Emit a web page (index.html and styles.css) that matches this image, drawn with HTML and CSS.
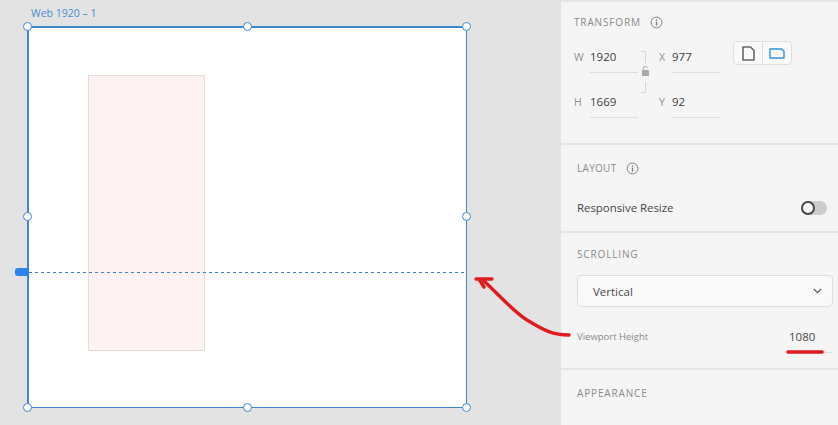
FILE: index.html
```html
<!DOCTYPE html>
<html lang="en">
<head>
    <meta charset="UTF-8">
    <title>Web 1920 - Viewport Height</title>
    <link rel="stylesheet" href="styles.css">
</head>
<body>
    <div class="app">
        <div class="canvas">
            <div class="artboard-name">Web 1920 – 1</div>
            <div class="artboard">
                <div class="pink-rect"></div>
                <div class="guide"></div>
                <span class="handle h-tl"></span>
                <span class="handle h-tc"></span>
                <span class="handle h-tr"></span>
                <span class="handle h-ml"></span>
                <span class="handle h-mr"></span>
                <span class="handle h-bl"></span>
                <span class="handle h-bc"></span>
                <span class="handle h-br"></span>
            </div>
            <div class="guide-tab"></div>
        </div>

        <div class="panel">
            <section class="section transform">
                <div class="heading">
                    <span>TRANSFORM</span>
                    <svg class="info" width="13" height="13" viewBox="0 0 13 13">
                        <circle cx="6.5" cy="6.5" r="5.4" fill="none" stroke="#808080" stroke-width="1"/>
                        <rect x="5.8" y="5.6" width="1.4" height="4" fill="#808080"/>
                        <rect x="5.8" y="3.3" width="1.4" height="1.4" fill="#808080"/>
                    </svg>
                </div>
                <div class="transform-body">
                    <div class="fields">
                        <label class="field-label">W</label>
                        <div class="field-value">1920</div>
                        <div class="lock">
                            <svg width="10" height="42" viewBox="0 0 10 42">
                                <path d="M1 0.5H5.5V12M5.5 31V41.5H1" fill="none" stroke="#d2d2d2" stroke-width="1"/>
                                <path d="M3.2 19V17.4a2.3 2.3 0 0 1 4.4 -0.6" fill="none" stroke="#a8a8a8" stroke-width="1"/>
                                <rect x="2" y="19" width="7" height="6" rx="0.8" fill="#a8a8a8"/>
                            </svg>
                        </div>
                        <label class="field-label">X</label>
                        <div class="field-value">977</div>
                        <label class="field-label">H</label>
                        <div class="field-value">1669</div>
                        <label class="field-label">Y</label>
                        <div class="field-value">92</div>
                    </div>
                    <div class="orient">
                        <div class="orient-btn">
                            <svg width="13" height="15" viewBox="0 0 13 15">
                                <path d="M1 1H8.5L12 4.5V14H1Z" fill="none" stroke="#666666" stroke-width="1.6" stroke-linejoin="round"/>
                            </svg>
                        </div>
                        <div class="orient-btn">
                            <svg width="16" height="11" viewBox="0 0 16 11">
                                <path d="M1 1H12.5L15 3.5V10H1Z" fill="none" stroke="#2e94e0" stroke-width="1.4" stroke-linejoin="round"/>
                            </svg>
                        </div>
                    </div>
                </div>
            </section>

            <section class="section layout">
                <div class="heading">
                    <span>LAYOUT</span>
                    <svg class="info" width="13" height="13" viewBox="0 0 13 13">
                        <circle cx="6.5" cy="6.5" r="5.4" fill="none" stroke="#808080" stroke-width="1"/>
                        <rect x="5.8" y="5.6" width="1.4" height="4" fill="#808080"/>
                        <rect x="5.8" y="3.3" width="1.4" height="1.4" fill="#808080"/>
                    </svg>
                </div>
                <div class="resize-row">
                    <span>Responsive Resize</span>
                    <div class="toggle"><span class="knob"></span></div>
                </div>
            </section>

            <section class="section scrolling">
                <div class="heading">SCROLLING</div>
                <div class="select">
                    <span>Vertical</span>
                    <svg width="9" height="6" viewBox="0 0 9 6">
                        <path d="M0.7 0.8L4.5 4.6L8.3 0.8" fill="none" stroke="#555" stroke-width="1.2"/>
                    </svg>
                </div>
                <div class="viewport-row">
                    <span class="viewport-label">Viewport Height</span>
                    <span class="viewport-value">1080</span>
                </div>
            </section>

            <section class="section appearance">
                <div class="heading">APPEARANCE</div>
            </section>
        </div>
    </div>

    <svg class="scribble" width="838" height="425" viewBox="0 0 838 425">
        <path d="M569 335C553 335 545 331 527 320C514 312 502 298 484 281" fill="none" stroke="#e01b1f" stroke-width="3.4" stroke-linecap="round"/>
        <path d="M476 279H492M479 279L484 287" fill="none" stroke="#e01b1f" stroke-width="3.4" stroke-linecap="round"/>
        <path d="M788 352H822" fill="none" stroke="#e01b1f" stroke-width="3.6" stroke-linecap="round"/>
    </svg>
</body>
</html>
```

FILE: styles.css
```css
html, body {
    margin: 0;
    padding: 0;
}
body {
    width: 838px;
    height: 425px;
    overflow: hidden;
    position: relative;
    font-family: 'Open Sans', 'Noto Sans', sans-serif;
    background-color: #e3e3e3;
}
.app {
    display: flex;
    height: 425px;
}

/* canvas side */
.canvas {
    width: 561px;
    flex-shrink: 0;
    position: relative;
    background-color: #e3e3e3;
}
.artboard-name {
    position: absolute;
    left: 31px;
    top: 6px;
    font-size: 10.5px;
    line-height: 14px;
    color: #4a8ad4;
}
.artboard {
    position: absolute;
    left: 27px;
    top: 26px;
    width: 437px;
    height: 379px;
    background-color: white;
    border: 1px solid #3f86d2;
    border-left-width: 2px;
    border-top-width: 2px;
}
.pink-rect {
    position: absolute;
    left: 59px;
    top: 47px;
    width: 115px;
    height: 274px;
    background-color: #fef2f2;
    border: 1px solid #ead8d8;
}
.guide {
    position: absolute;
    left: 0;
    right: 0;
    top: 244px;
    height: 1px;
    background-image: repeating-linear-gradient(to right, #3f7fc8 0, #3f7fc8 3px, transparent 3px, transparent 6px);
}
.guide-tab {
    position: absolute;
    left: 15px;
    top: 268px;
    width: 14px;
    height: 8px;
    background-color: #2a82ea;
    border-radius: 3px 0 0 3px;
}
.handle {
    position: absolute;
    width: 7px;
    height: 7px;
    background-color: white;
    border: 1px solid #3f86d2;
    border-radius: 50%;
}
.h-tl { left: -6px; top: -6px; }
.h-tc { left: 214px; top: -6px; }
.h-tr { left: 433px; top: -6px; }
.h-ml { left: -6px; top: 184px; }
.h-mr { left: 433px; top: 184px; }
.h-bl { left: -6px; top: 375px; }
.h-bc { left: 214px; top: 375px; }
.h-br { left: 433px; top: 375px; }

/* right panel */
.panel {
    flex: 1;
    padding-top: 2px;
    background-color: #e6e6e6;
    display: flex;
    flex-direction: column;
    gap: 2px;
    color: #4a4a4a;
}
.section {
    background-color: #f5f5f5;
    padding-left: 16px;
    padding-right: 5px;
}
.heading {
    display: flex;
    align-items: center;
    gap: 9px;
    font-size: 10px;
    line-height: 14px;
    letter-spacing: 0.85px;
    color: #8a8a8a;
}
.transform {
    height: 141px;
    padding-left: 13px;
    padding-top: 13px;
    box-sizing: border-box;
}
.transform-body {
    display: flex;
    align-items: flex-start;
    margin-top: 12px;
}
.fields {
    display: grid;
    grid-template-columns: 16px 48px 21px 13px 48px;
    grid-auto-rows: 45px;
    width: 146px;
}
.field-label {
    height: 31px;
    line-height: 32px;
    font-size: 10.5px;
    color: #8f8f8f;
}
.field-value {
    font-size: 11.5px;
    line-height: 32px;
    height: 31px;
    color: #3c3c3c;
    border-bottom: 1px solid #dedede;
    align-self: start;
}
.lock {
    grid-row: 1 / span 2;
    grid-column: 3;
    margin-top: 10px;
    margin-left: 2px;
}
.lock svg {
    display: block;
}
.orient {
    display: flex;
    margin-left: 13px;
    height: 24px;
    width: 59px;
    box-sizing: border-box;
    background-color: #f9f9f9;
    border: 1px solid #dfdfdf;
    border-radius: 4px;
}
.orient-btn {
    flex: 1;
    display: flex;
    align-items: center;
    justify-content: center;
}
.orient-btn + .orient-btn {
    border-left: 1px solid #dfdfdf;
}
.layout {
    height: 86px;
    padding-top: 16px;
    box-sizing: border-box;
}
.layout .heading {
    letter-spacing: 0.3px;
}
.resize-row {
    display: flex;
    align-items: center;
    justify-content: space-between;
    margin-top: 25px;
    padding-right: 6px;
    font-size: 11.4px;
    line-height: 16px;
    color: #464646;
}
.toggle {
    position: relative;
    width: 26px;
    height: 14px;
    border-radius: 7px;
    background-color: #cccccc;
}
.knob {
    position: absolute;
    left: 0;
    top: 0;
    width: 14px;
    height: 14px;
    box-sizing: border-box;
    border: 2px solid #484848;
    border-radius: 50%;
    background-color: #f8f8f8;
}
.scrolling {
    height: 135px;
    padding-top: 14px;
    box-sizing: border-box;
}
.select {
    display: flex;
    align-items: center;
    justify-content: space-between;
    height: 32px;
    box-sizing: border-box;
    margin-top: 14px;
    padding: 0 10px 0 15px;
    font-size: 11.5px;
    color: #4a4a4a;
    background-color: #f9f9f9;
    border: 1px solid #dddddd;
    border-radius: 4px;
}
.viewport-row {
    display: flex;
    align-items: flex-start;
    justify-content: space-between;
    margin-top: 15px;
}
.viewport-label {
    font-size: 9.5px;
    line-height: 30px;
    color: #8a8a8a;
}
.viewport-value {
    width: 46px;
    height: 31px;
    padding: 7px 0 0 2px;
    box-sizing: border-box;
    font-size: 11.5px;
    line-height: 16px;
    color: #4a4a4a;
    border-bottom: 1px solid #dedede;
}
.appearance {
    flex: 1;
    padding-top: 16px;
}
.scribble {
    position: absolute;
    left: 0;
    top: 0;
    pointer-events: none;
}
```
